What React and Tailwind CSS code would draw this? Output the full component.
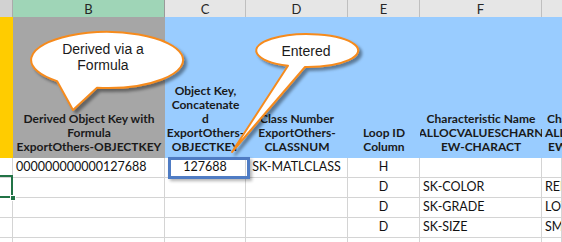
const grid = "grid grid-cols-[13px_152px_81px_102px_72px_122px_1fr]";

const rows = [
  { b: "000000000000127688", c: "127688", d: "SK-MATLCLASS", e: "H", f: "", g: "" },
  { b: "", c: "", d: "", e: "D", f: "SK-COLOR", g: "RED" },
  { b: "", c: "", d: "", e: "D", f: "SK-GRADE", g: "LOW" },
  { b: "", c: "", d: "", e: "D", f: "SK-SIZE", g: "SMALL" },
  { b: "", c: "", d: "", e: "", f: "", g: "" },
];

function HeadCell({ bg, lines, align = "center" }) {
  return (
    <div
      className={`${bg} flex flex-col justify-end pb-[4px] overflow-hidden font-bold text-[12px] leading-[14px] text-[#1a1a1a] ${
        align === "center" ? "items-center text-center" : "items-start"
      }`}
    >
      {lines.map((l, i) => (
        <div key={i} className="whitespace-nowrap">
          {l}
        </div>
      ))}
    </div>
  );
}

function Cell({ children, align = "left" }) {
  return (
    <div
      className={`h-[20px] flex items-center border-r border-b border-[#d4d4d4] overflow-hidden whitespace-nowrap text-[12.5px] text-[#111] ${
        align === "center" ? "justify-center" : "justify-start pl-[3px]"
      }`}
    >
      {children}
    </div>
  );
}

export default function App() {
  return (
    <div className="relative w-[562px] h-[242px] overflow-hidden bg-white font-['Lato',sans-serif]">
      {/* column letters */}
      <div className={`${grid} h-[17px] text-[13px] text-[#262626]`}>
        <div className="bg-[#d2d2d2] border-b-2 border-b-[#217346] border-r border-r-[#ababab]" />
        <div className="bg-[#9fd5b7] border-r border-r-[#9a9a9a] border-b border-b-[#8cc4a6] flex items-center justify-center">
          B
        </div>
        {["C", "D", "E", "F"].map((c) => (
          <div
            key={c}
            className="bg-[#e6e6e6] border-r border-r-[#bfbfbf] border-b border-b-[#c6c6c6] flex items-center justify-center"
          >
            {c}
          </div>
        ))}
        <div className="bg-[#e6e6e6] border-b border-b-[#c6c6c6]" />
      </div>

      {/* header row */}
      <div className={`${grid} h-[141px]`}>
        <div className="bg-[#ffcc00]" />
        <HeadCell
          bg="bg-[#a6a6a6]"
          lines={["Derived Object Key with", "Formula", "ExportOthers-OBJECTKEY"]}
        />
        <HeadCell
          bg="bg-[#99ccff]"
          lines={["Object Key,", "Concatenate", "d", "ExportOthers-", "OBJECTKEY"]}
        />
        <HeadCell bg="bg-[#99ccff]" lines={["Class Number", "ExportOthers-", "CLASSNUM"]} />
        <HeadCell bg="bg-[#99ccff]" lines={["Loop ID", "Column"]} />
        <HeadCell
          bg="bg-[#99ccff]"
          lines={["Characteristic Name", "ALLOCVALUESCHARN", "EW-CHARACT"]}
        />
        <div className="bg-[#99ccff] flex flex-col justify-end pb-[4px] overflow-hidden font-bold text-[12px] leading-[14px] text-[#1a1a1a] whitespace-nowrap">
          <div className="pl-[5px]">Characteristic Value</div>
          <div className="pl-[3px]">ALLOCVALUESCHARN</div>
          <div className="pl-[6px]">EW-VALUE</div>
        </div>
      </div>

      {/* data rows */}
      {rows.map((r, i) => (
        <div key={i} className={grid}>
          <Cell />
          <Cell>{r.b}</Cell>
          <Cell align="center">{r.c}</Cell>
          <Cell align="center">{r.d}</Cell>
          <Cell align="center">{r.e}</Cell>
          <Cell>{r.f}</Cell>
          <Cell>{r.g}</Cell>
        </div>
      ))}

      {/* active cell in column A */}
      <div className="absolute left-[-5px] top-[175px] w-[18px] h-[23px] border-2 border-[#217346]" />
      <div className="absolute left-[10px] top-[195px] w-[6px] h-[6px] bg-[#217346] border border-white" />

      {/* highlight box around the entered key */}
      <div className="absolute left-[168px] top-[157px] w-[82px] h-[22px] border-[3px] border-[#4f7cc4] shadow-[2px_2px_3px_rgba(0,0,0,0.3)]" />

      {/* callout bubbles */}
      <svg
        className="absolute inset-0 pointer-events-none"
        width="562"
        height="242"
        viewBox="0 0 562 242"
      >
        <defs>
          <filter id="bubbleShadow" x="-20%" y="-20%" width="140%" height="160%">
            <feDropShadow dx="3" dy="3" stdDeviation="1.6" floodColor="#000" floodOpacity="0.4" />
          </filter>
        </defs>
        <path
          d="M 97 87.8 A 76 28 0 1 0 57 81.1 L 73 110 Z"
          fill="#fff"
          stroke="#f68b1f"
          strokeWidth="2"
          strokeLinejoin="round"
          filter="url(#bubbleShadow)"
        />
        <path
          d="M 305 67 A 51 16.5 0 1 0 288 65.8 L 232 152 Z"
          fill="#fff"
          stroke="#f68b1f"
          strokeWidth="2"
          strokeLinejoin="round"
          filter="url(#bubbleShadow)"
        />
      </svg>

      <div className="absolute left-[27px] top-[41px] w-[152px] text-center text-[14px] leading-[16px] text-[#1a1a1a] font-['Liberation_Sans',Arial,sans-serif]">
        <div>Derived via a</div>
        <div>Formula</div>
      </div>
      <div className="absolute left-[256px] top-[43px] w-[100px] text-center text-[14px] leading-[16px] text-[#1a1a1a] font-['Liberation_Sans',Arial,sans-serif]">
        Entered
      </div>
    </div>
  );
}
